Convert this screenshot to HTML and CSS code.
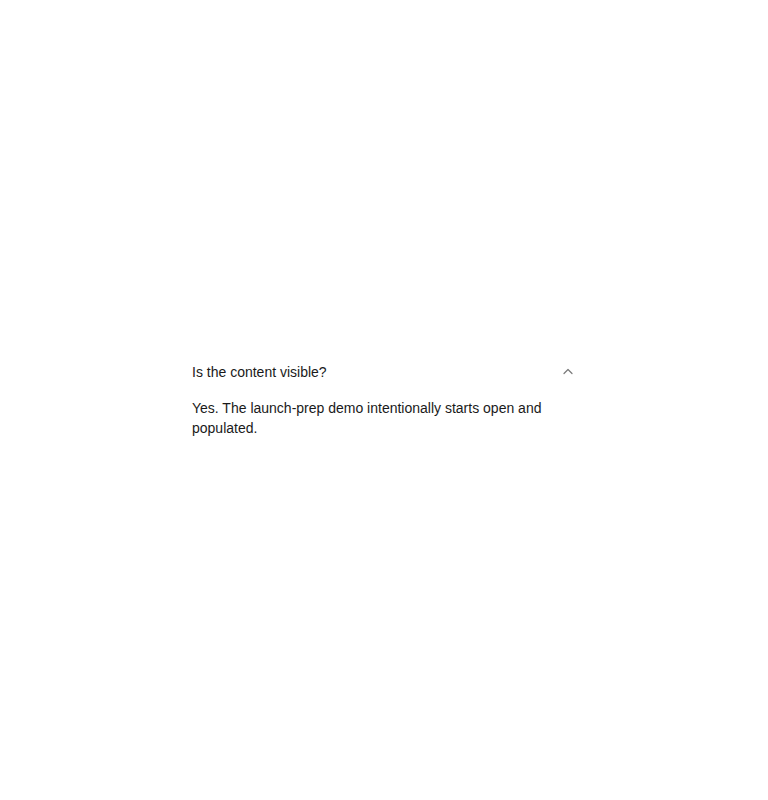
FILE: index.html
```html
<!DOCTYPE html>
<html>
<head>
<meta charset="utf-8">
<link rel="stylesheet" href="styles.css">
</head>
<body>
<main class="page">
  <section class="accordion">
    <button class="trigger" type="button">
      <span class="question">Is the content visible?</span>
      <svg class="chevron" width="10" height="7" viewBox="0 0 10 7" aria-hidden="true">
        <polyline points="1,5.5 5,1.5 9,5.5" fill="none" stroke="#7a7a7a" stroke-width="1.2" stroke-linecap="round" stroke-linejoin="round"/>
      </svg>
    </button>
    <div class="answer">Yes. The launch-prep demo intentionally starts open and populated.</div>
  </section>
</main>
</body>
</html>
```

FILE: styles.css
```css
html, body {
  margin: 0;
  padding: 0;
  background: #ffffff;
}
body {
  font-family: "Liberation Sans", Arial, sans-serif;
  font-size: 14px;
  line-height: 20px;
  color: #1a1a1a;
}
.page {
  min-height: 800px;
  display: flex;
  align-items: center;
  justify-content: center;
}
.accordion {
  width: 384px;
  display: flex;
  flex-direction: column;
  gap: 16px;
}
.trigger {
  display: flex;
  align-items: center;
  justify-content: space-between;
  width: 100%;
  padding: 0;
  margin: 0;
  border: 0;
  background: none;
  font: inherit;
  color: inherit;
  text-align: left;
}
.chevron {
  margin-right: 3px;
  margin-top: -1px;
  display: block;
}
.answer {
  color: #1a1a1a;
}
```
